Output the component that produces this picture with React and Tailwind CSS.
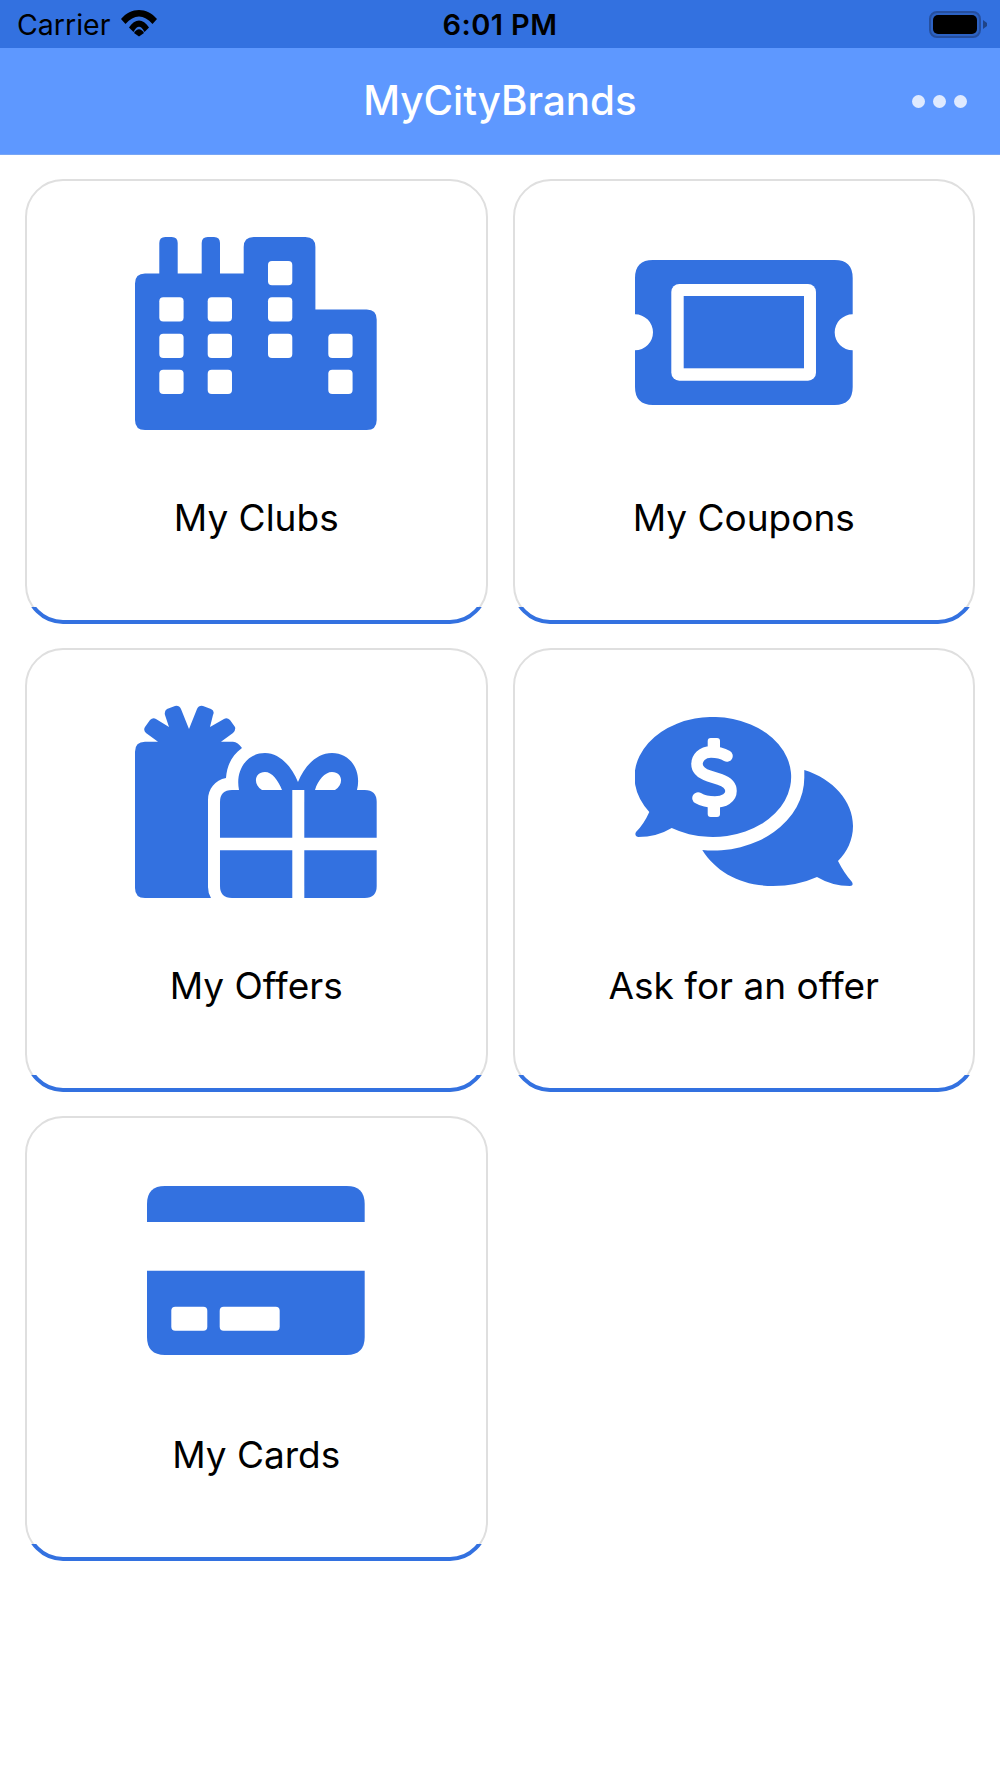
const BLUE = "#3371e0";

function Clubs() {
  return (
    <svg width="241.7" height="193" viewBox="0 0 241.7 193" className="block">
      <path fill={BLUE} d="M24.300 36.600V6Q24.300 0 30.300 0H36.700Q42.700 0 42.700 6V36.600H66.700V6Q66.700 0 72.700 0H79Q85 0 85 6V36.600H108.700V10Q108.700 0 118.700 0H170.400Q180.400 0 180.400 10V72.400H231.700Q241.700 72.400 241.700 82.400V183Q241.700 193 231.700 193H10Q0 193 0 183V46.600Q0 36.600 10 36.600Z" />
      {[[24.3,60.3],[24.3,96.7],[24.3,132.7],[72.7,60.3],[72.7,96.7],[72.7,132.7],[133,24],[133,60.3],[133,96.7],[193.3,96.7],[193.3,132.7]].map(([x, y]) => (
        <rect key={x + "-" + y} x={x} y={y} width="24.3" height="24.3" rx="4" fill="#fff" />
      ))}
    </svg>
  );
}

function Coupons() {
  return (
    <svg width="217.7" height="145" viewBox="0 0 217.7 145" className="block">
      <path fill={BLUE} d="M18 0H199.700Q217.700 0 217.700 18V54.300A18 18 0 0 0 217.700 90.300V127Q217.700 145 199.700 145H18Q0 145 0 127V90.300A18 18 0 0 0 0 54.300V18Q0 0 18 0Z" />
      <rect x="36.300" y="24" width="144.700" height="96.700" rx="8" fill="#fff" />
      <rect x="48.700" y="36" width="120.300" height="72.300" fill={BLUE} />
    </svg>
  );
}

function Offers() {
  return (
    <svg width="241.7" height="193" viewBox="0 0 241.7 193" className="block">
      <path fill={BLUE} d="M10 36.700H23L11 28Q8 25 10 22L15 15Q18 12 21 14L34 22L30 10Q29 6 32 4L40 1Q44 0 46 4L54 24L62 4Q64 0 68 1L76 4Q80 6 78 10L75 22L89 14Q92 12 95 15L100 22Q101 25 98 28L86 36.700H98Q103 37 107 43C97 50 92 60 91 73C80 75 73 84 73 95V182Q73 188 76 193H10Q0 193 0 183V46.700Q0 36.700 10 36.700Z" />
      <path fill={BLUE} d="M104 85C100 65 112 48 130 48C145 48 157 62 163 77C169 62 181 48 197 48C215 48 227 65 222 85H200C209 80 208 67 197 67C190 67 183 75 180 85H147C143 75 137 67 130 67C119 67 118 80 127 85Z" />
      <path fill={BLUE} d="M85 97Q85 85 97 85H157.300V132.700H85Z" />
      <path fill={BLUE} d="M169.300 85H229.700Q241.700 85 241.700 97V132.700H169.300Z" />
      <path fill={BLUE} d="M85 145.300H157.300V193H97Q85 193 85 181Z" />
      <path fill={BLUE} d="M169.300 145.300H241.700V181Q241.700 193 229.700 193H169.300Z" />
    </svg>
  );
}

function Ask() {
  return (
    <svg width="218" height="170" viewBox="0 0 218 170" className="block">
      <path fill={BLUE} d="M36.700 111A78.300 60 0 1 0 14.300 95Q9 107 1 115Q-1 119 3 120Q22 120 36.700 111Z" />
      <path fill={BLUE} d="M169.300 53C198 62 218 84 218 109C218 123 212 135 203 144Q209 156 217 165Q219 169 215 169Q197 169 182 160Q162 169 138 169C106 169 81 155 67.300 133A91 73 0 0 0 169.300 60Z" />
      <path fill="none" stroke="#fff" strokeWidth="11.500" strokeLinecap="round" d="M92 39C87 36 82 35 76 35C67 35 62 41 62 47C62 54 68 57 74 59L85 62.500C92 65 96 69 96 74C96 81 89 85 80 85C73 85 68 84 63 81" />
      <rect x="72.700" y="21" width="12.300" height="14" rx="3" fill="#fff" />
      <rect x="72.700" y="86" width="12.300" height="14" rx="3" fill="#fff" />
    </svg>
  );
}

function Cards() {
  return (
    <svg width="217.7" height="169" viewBox="0 0 217.7 169" className="block">
      <path fill={BLUE} d="M18 0H199.700Q217.700 0 217.700 18V36H0V18Q0 0 18 0Z" />
      <path fill={BLUE} d="M0 84.700H217.700V151Q217.700 169 199.700 169H18Q0 169 0 151Z" />
      <rect x="24.300" y="120.700" width="36" height="24" rx="4" fill="#fff" />
      <rect x="72.700" y="120.700" width="60" height="24" rx="4" fill="#fff" />
    </svg>
  );
}

function Tile({ label, icon, iconBox }) {
  return (
    <div className="relative h-[444px] rounded-[38px] border-[2.5px] border-[#dfdfdf] bg-white flex flex-col items-center">
      <div className={iconBox}>{icon}</div>
      <span className="absolute top-[314.5px] left-0 right-0 text-center text-[37px] leading-[44px] text-black">{label}</span>
      <div className="absolute -left-[2.5px] -right-[2.5px] -bottom-[2.5px] h-[17px] overflow-hidden">
        <div className="absolute left-0 right-0 bottom-0 h-[100px] rounded-[38px] border-[4.5px] border-[#3371e0]" />
      </div>
    </div>
  );
}

export default function App() {
  return (
    <div className="min-h-[1778px] bg-white font-['Inter',sans-serif]">
      <div className="h-[48px] bg-[#3371e0] flex items-center justify-between pl-[17px] pr-[13px] relative">
        <div className="flex items-center gap-[11px]">
          <span className="text-[28.5px] text-black leading-none pt-[2px]">Carrier</span>
          <svg width="36" height="27" viewBox="0 0 36 27" className="mt-[-1px]">
            <path d="M0 9C10 -3 26 -3 36 9L31.500 14C23 4 13 4 4.500 14Z" fill="#000" />
            <path d="M8 17.500C14 8 22 8 28 17.500L23.500 22C20 15 16 15 12.500 22Z" fill="#000" />
            <path d="M13 23C16 18 20 18 23 23L18 26.500Z" fill="#000" />
          </svg>
        </div>
        <span className="absolute left-0 right-0 text-center text-[29px] tracking-[0.4px] font-semibold text-black leading-none pt-[1px]">6:01 PM</span>
        <div className="flex items-center">
          <div className="w-[52px] h-[27px] rounded-[8px] border-2 border-[#264f9e] bg-[#2c62c4] p-[2px]">
            <div className="w-full h-full rounded-[5px] bg-black" />
          </div>
          <svg width="4" height="9" viewBox="0 0 4 9" className="ml-[2px]">
            <path d="M0 0L4 3V6L0 9Z" fill="#1f4488" />
          </svg>
        </div>
      </div>
      <div className="relative h-[107px] bg-[#5e98ff] border-b border-[#78a6f5] flex items-center justify-center">
        <span className="text-[40.3px] font-medium text-white">MyCityBrands</span>
        <div className="absolute right-[33px] top-[47px] flex gap-[8.5px]">
          <div className="w-[12.7px] h-[12.7px] rounded-full bg-[#dfeaff]" />
          <div className="w-[12.7px] h-[12.7px] rounded-full bg-[#dfeaff]" />
          <div className="w-[12.7px] h-[12.7px] rounded-full bg-[#dfeaff]" />
        </div>
      </div>
      <div className="grid grid-cols-2 gap-x-[25px] gap-y-[24.5px] pl-[25px] pr-[25px] pt-[24px]">
        <Tile label="My Clubs" icon={<Clubs />} iconBox="mt-[55.5px]" />
        <Tile label="My Coupons" icon={<Coupons />} iconBox="mt-[79.2px]" />
        <Tile label="My Offers" icon={<Offers />} iconBox="mt-[55px]" />
        <Tile label="Ask for an offer" icon={<Ask />} iconBox="mt-[67px]" />
        <Tile label="My Cards" icon={<Cards />} iconBox="mt-[67.5px]" />
      </div>
    </div>
  );
}
